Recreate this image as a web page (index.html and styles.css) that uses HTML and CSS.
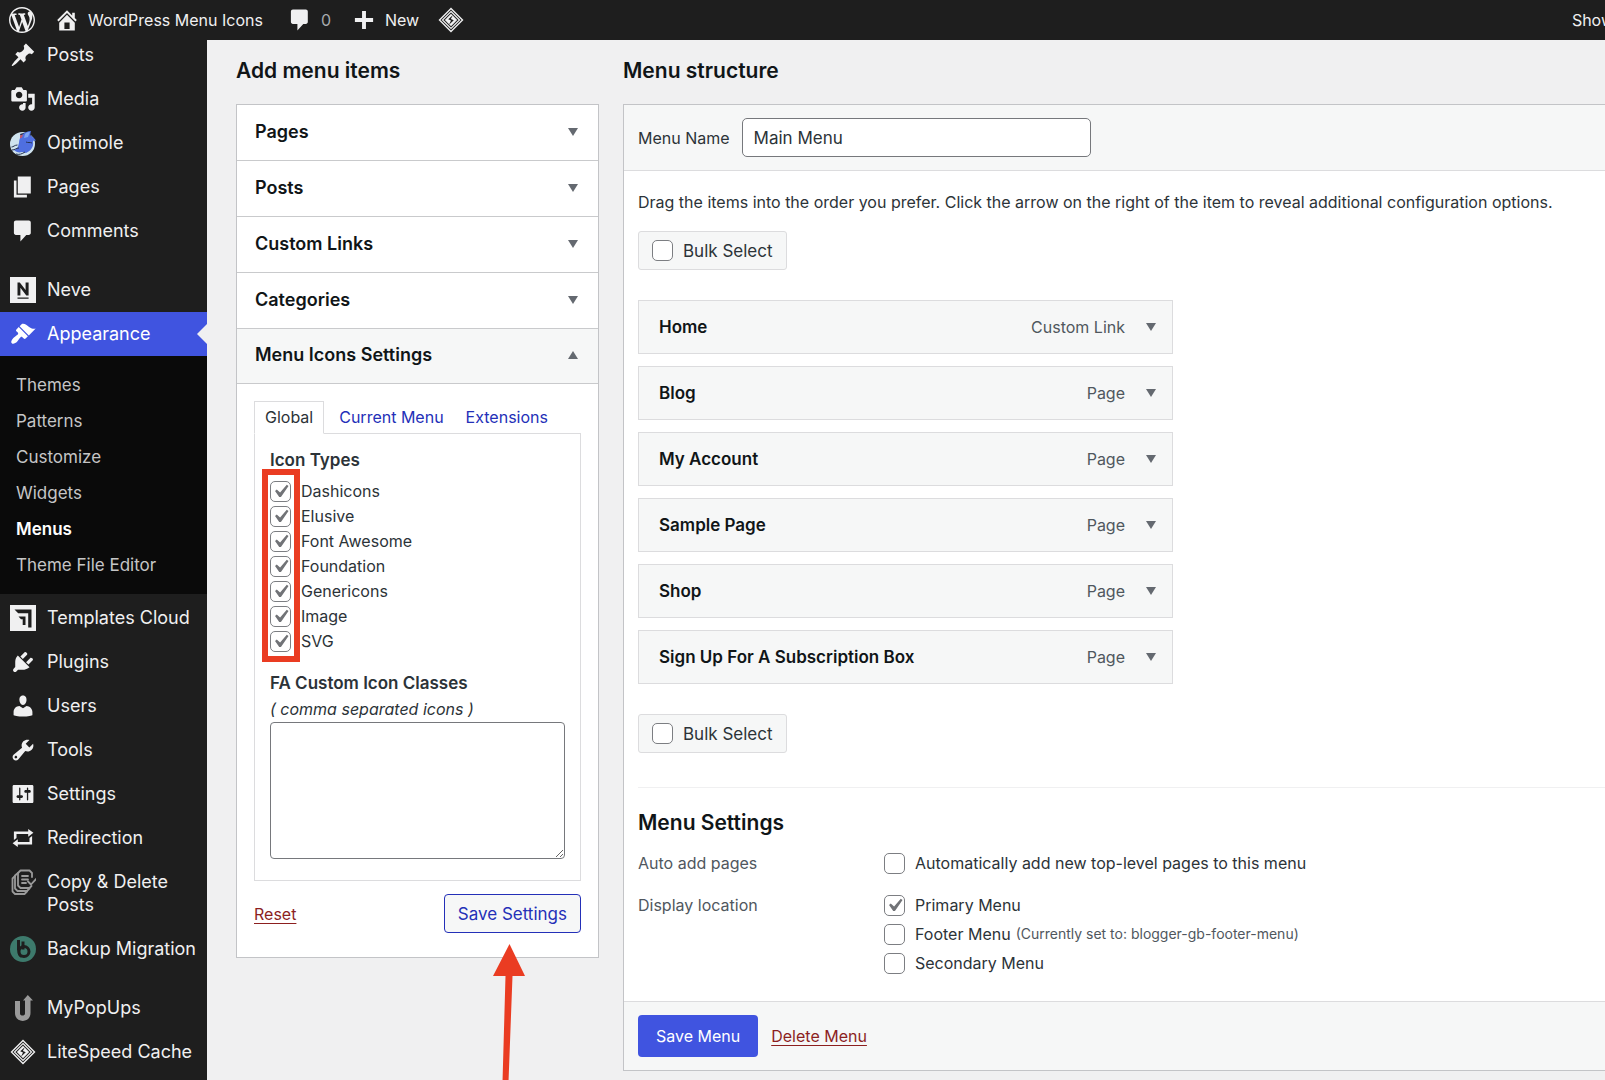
FILE: index.html
```html
<!DOCTYPE html>
<html lang="en">
<head>
<meta charset="utf-8">
<meta name="viewport" content="width=device-width, initial-scale=1">
<title>Menus - WordPress Menu Icons</title>
<link rel="stylesheet" href="styles.css">
</head>
<body>
<svg class="sprite" aria-hidden="true">
  <symbol id="i-wp" viewBox="0 0 20 20"><path d="M20 10c0-5.51-4.49-10-10-10C4.48 0 0 4.49 0 10c0 5.52 4.48 10 10 10 5.51 0 10-4.48 10-10zM7.78 15.37L4.37 6.22c.55-.02 1.17-.08 1.17-.08.5-.06.44-1.13-.06-1.11 0 0-1.45.11-2.37.11-.18 0-.37 0-.58-.01C4.12 2.69 6.87 1.11 10 1.11c2.33 0 4.45.87 6.05 2.34-.68-.11-1.65.39-1.65 1.58 0 .74.45 1.36.9 2.1.35.61.55 1.36.55 2.46 0 1.49-1.4 5-1.4 5l-3.03-8.37c.54-.02.82-.17.82-.17.5-.05.44-1.25-.06-1.22 0 0-1.44.12-2.38.12-.87 0-2.33-.12-2.33-.12-.5-.03-.56 1.2-.06 1.22l.92.08 1.26 3.41zM17.41 10c.24-.64.74-1.87.43-4.25.7 1.29 1.05 2.71 1.05 4.25 0 3.29-1.73 6.24-4.4 7.78.97-2.59 1.94-5.2 2.92-7.78zM6.1 18.09C3.12 16.65 1.11 13.53 1.11 10c0-1.3.23-2.48.72-3.59C3.25 10.3 4.67 14.2 6.1 18.09zm4.03-6.63l2.58 6.98c-.86.29-1.76.45-2.71.45-.79 0-1.57-.11-2.29-.33.81-2.38 1.62-4.74 2.42-7.1z"/></symbol>
  <symbol id="i-home" viewBox="0 0 20 20"><path d="M16 8.5l1.53 1.53-1.06 1.06L10 4.6l-6.47 6.49-1.06-1.06L10 2.5l4 4v-2h2v4zm-6-2.46l6 5.99V18H4v-5.97zM12 17v-5H8v5h4z"/></symbol>
  <symbol id="i-comment" viewBox="0 0 20 20"><path d="M4.500 2h10c.8 0 1.500.7 1.500 1.500v8c0 .8-.7 1.500-1.500 1.500H12.500L8 18v-5H4.500C3.700 13 3 12.300 3 11.500v-8C3 2.700 3.700 2 4.500 2z"/></symbol>
  <symbol id="i-plus" viewBox="0 0 20 20"><path d="M17 8.500v3h-5.500V17h-3v-5.500H3v-3h5.500V3h3v5.500z"/></symbol>
  <symbol id="i-litespeed" viewBox="0 0 26 26"><path fill="none" stroke="currentColor" stroke-width="1.400" d="M13 1.500L24.500 13 13 24.500 1.500 13z"/><path fill="none" stroke="currentColor" stroke-width="1.200" d="M13 4.500L21.500 13 13 21.500 4.500 13z"/><path d="M13 6.800L19.200 13 13 19.200 6.800 13z"/><path fill="#1e1e1e" d="M14.800 8.200l-4.600 4 2.800 1.300-2 4.200 4.800-4.400-2.900-1.300z"/></symbol>
  <symbol id="i-post" viewBox="0 0 20 20"><path d="M10.440 3.020l1.820-1.820 6.360 6.350-1.830 1.820c-1.050-.68-2.480-.57-3.410.36l-.75.75c-.92.93-1.040 2.350-.35 3.410l-1.830 1.820-2.410-2.410-2.800 2.790c-.42.42-3.380 2.710-3.800 2.290s1.860-3.390 2.280-3.810l2.790-2.790L4.100 9.360l1.830-1.820c1.050.69 2.480.57 3.400-.36l.75-.75c.93-.92 1.050-2.350.36-3.410z"/></symbol>
  <symbol id="i-media" viewBox="0 0 20 20"><path d="M13 11V4c0-.55-.45-1-1-1h-1.670L9 1H5L3.670 3H2c-.55 0-1 .45-1 1v7c0 .55.45 1 1 1h10c.55 0 1-.45 1-1zM7 4.500c1.380 0 2.500 1.120 2.500 2.500S8.380 9.500 7 9.500 4.500 8.380 4.500 7 5.620 4.500 7 4.500zM14 6h5v10.500c0 1.380-1.120 2.500-2.500 2.500S14 17.880 14 16.500s1.120-2.500 2.500-2.500c.17 0 .34.02.5.05V9h-3V6zm-4 8.050V13h2v3.500c0 1.380-1.120 2.500-2.500 2.500S7 17.880 7 16.500 8.120 14 9.500 14c.17 0 .34.02.5.05z"/></symbol>
  <symbol id="i-optimole" viewBox="0 0 26 26"><ellipse cx="12.500" cy="14" rx="12.500" ry="12" fill="#cfe3ee"/><path fill="#26324f" d="M10 4l10-3 2 7-4 3-6-1z"/><path fill="#4f6fe0" d="M12 5c3-3 6-4 9-4l-1 4c2 2 5 3 6 6-2-1-3 0-3 1 1 4-2 9-7 11l-4-1c-3 1-6 0-8-2 4-1 4-4 5-7 0-3 1-6 3-8z"/><path fill="#7fa5f0" d="M15 4c2-2 3-2 5-2l-2 5-4 1z"/><path fill="none" stroke="#26324f" stroke-width="1" d="M1.500 17c2 0 3-2 6-2M2 20c3 0 4-2 7-2M6 24c3 1 6 0 9-2M16 12c2 1 4 0 6 1"/><path fill="#c4576b" d="M10 5.500l3-1-1 3-2 1z"/></symbol>
  <symbol id="i-pages" viewBox="0 0 20 20"><path d="M6 15V2h10v13H6zm-1 1h8v2H3V5h2v11z"/></symbol>
  <symbol id="i-neve" viewBox="0 0 26 26"><path d="M0 0h26v26H0z"/><path fill="#1e1e1e" d="M7.500 5.500H9.800l5.800 7.600V5.500h3v13h-2.300l-5.900-7.700v7.700h-2.900zM7.500 20.500h11.100v1.300H7.500z"/></symbol>
  <symbol id="i-brush" viewBox="0 0 20 20"><path d="M14.480 11.060L7.410 3.990l1.500-1.500c.5-.56 2.300-.47 3.510.32 1.210.8 1.430 1.280 2.910 2.100 1.180.64 2.450 1.260 4.450.85zm-.71.71L6.700 4.700 4.930 6.470c-.39.39-.39 1.020 0 1.410l1.060 1.060c.39.39.39 1.030 0 1.420-.6.6-1.430 1.110-2.210 1.690-.35.26-.7.53-1.010.84C1.430 14.230.4 16.080 1.400 17.070c.99 1 2.840-.03 4.180-1.360.31-.31.58-.66.85-1.020.57-.78 1.080-1.610 1.690-2.210.39-.39 1.020-.39 1.410 0l1.060 1.060c.39.39 1.020.39 1.410 0z"/></symbol>
  <symbol id="i-templates" viewBox="0 0 26 26"><path d="M0 0h26v26H0z"/><path fill="#1e1e1e" d="M4.500 4.500h17v18h-3.300V8.200H8.200zM8.500 11.500h7v8.500h-2.800v-5.700H11z"/></symbol>
  <symbol id="i-plugins" viewBox="0 0 20 20"><path d="M13.110 4.360L9.870 7.600 8 5.730l3.240-3.240c.35-.34 1.050-.2 1.560.32.52.51.66 1.210.31 1.550zm-8 1.770l.91-1.120 9.010 9.010-1.190.84c-.71.71-2.630 1.160-3.820 1.160H6.140L4.900 17.260c-.59.59-1.540.59-2.120 0-.59-.58-.59-1.530 0-2.120l1.240-1.240v-3.880c0-1.130.4-3.190 1.090-3.890zm7.260 3.970l3.240-3.240c.34-.35 1.040-.21 1.550.31.52.51.66 1.210.31 1.550l-3.240 3.250z"/></symbol>
  <symbol id="i-users" viewBox="0 0 20 20"><path d="M10 9.250c-2.270 0-2.730-3.440-2.730-3.440C7 4.020 7.820 2 9.970 2c2.160 0 2.980 2.020 2.710 3.810 0 0-.41 3.440-2.680 3.440zm0 2.570L12.720 10c2.390 0 4.520 2.330 4.520 4.530v2.490s-3.650 1.130-7.240 1.130c-3.650 0-7.240-1.130-7.240-1.130v-2.490c0-2.250 1.940-4.480 4.470-4.480z"/></symbol>
  <symbol id="i-tools" viewBox="0 0 20 20"><path d="M16.680 9.770c-1.340 1.340-3.300 1.670-4.950.99l-5.410 6.520c-.99.99-2.590.99-3.580 0s-.99-2.590 0-3.570l6.520-5.420c-.68-1.650-.35-3.610.99-4.950 1.280-1.280 3.120-1.620 4.720-1.060l-2.890 2.890 2.820 2.820 2.860-2.870c.53 1.580.18 3.390-1.080 4.650zM3.810 16.210c.4.39 1.040.39 1.430 0 .4-.4.4-1.040 0-1.430-.39-.4-1.030-.4-1.430 0-.39.39-.39 1.030 0 1.430z"/></symbol>
  <symbol id="i-settings" viewBox="0 0 20 20"><path d="M18 16V4c0-.55-.45-1-1-1H3c-.55 0-1 .45-1 1v12c0 .55.45 1 1 1h14c.55 0 1-.45 1-1zM8 11h1c.55 0 1 .45 1 1s-.45 1-1 1H8v1.500c0 .28-.22.5-.5.5s-.5-.22-.5-.5V13H6c-.55 0-1-.45-1-1s.45-1 1-1h1V5.500c0-.28.22-.5.5-.5s.5.22.5.5V11zm5-2h-1c-.55 0-1-.45-1-1s.45-1 1-1h1V5.500c0-.28.22-.5.5-.5s.5.22.5.5V7h1c.55 0 1 .45 1 1s-.45 1-1 1h-1v5.500c0 .28-.22.5-.5.5s-.5-.22-.5-.5V9z"/></symbol>
  <symbol id="i-repeat" viewBox="0 0 20 20"><path d="M5 7v3l-2 1.500V5h11V3l4 3.010L14 9V7H5zm10 6v-3l2-1.500V15H6v2l-4-3.010L6 11v2h9z"/></symbol>
  <symbol id="i-copy" viewBox="0 0 26 26"><g fill="none" stroke="#9a9a9a" stroke-width="1.800" stroke-linejoin="round" stroke-linecap="round"><path d="M22 8V4l-2.500-2.500h-9L8 4v12.500l2.500 2.500h9l2-2"/><path d="M8 4L5 6.500v13L7.500 22H17l2.500-2.500"/><path d="M5 7L2.500 9.500v13L5 25h9.500l2.500-2.500"/><path d="M12 7h6M12 10.500h6M12 14h4M18 12.500l3 3 6-6.500"/></g></symbol>
  <symbol id="i-backup" viewBox="0 0 26 26"><circle cx="13" cy="13" r="13" fill="#3d7a6c"/><path fill="none" stroke="#1e1e1e" stroke-width="3" d="M8.500 4v10.500M13 5.500v8"/><circle cx="14" cy="15.500" r="5" fill="none" stroke="#1e1e1e" stroke-width="3"/><path fill="none" stroke="#1e1e1e" stroke-width="2" d="M8.500 13v3a6 6 0 0 0 3 5"/></symbol>
  <symbol id="i-popups" viewBox="0 0 26 26"><path fill="#9a9a9a" d="M5 6h5v12.500c0 2.700 5 2.700 5 0V5.500h-2L17.800 0 23 5.500h-2.500V18c0 10.500-15.500 10.500-15.500 0z"/></symbol>
</svg>

<header class="adminbar">
  <a class="bar-logo" href="#" aria-label="About WordPress"><svg class="icon"><use href="#i-wp"/></svg></a>
  <a class="bar-site" href="#"><svg class="icon"><use href="#i-home"/></svg>WordPress Menu Icons</a>
  <a class="bar-comments" href="#"><svg class="icon"><use href="#i-comment"/></svg><span>0</span></a>
  <a class="bar-new" href="#"><svg class="icon"><use href="#i-plus"/></svg>New</a>
  <a class="bar-cache" href="#" aria-label="LiteSpeed Cache"><svg class="icon"><use href="#i-litespeed"/></svg></a>
  <a class="bar-account" href="#">Show</a>
</header>

<div class="layout">
  <nav class="sidebar" aria-label="Main menu">
    <a class="nav-item" href="#"><svg class="icon"><use href="#i-post"/></svg>Posts</a>
    <a class="nav-item" href="#"><svg class="icon"><use href="#i-media"/></svg>Media</a>
    <a class="nav-item" href="#"><svg class="icon"><use href="#i-optimole"/></svg>Optimole</a>
    <a class="nav-item" href="#"><svg class="icon"><use href="#i-pages"/></svg>Pages</a>
    <a class="nav-item" href="#"><svg class="icon"><use href="#i-comment"/></svg>Comments</a>
    <a class="nav-item spaced" href="#"><svg class="icon"><use href="#i-neve"/></svg>Neve</a>
    <a class="nav-item current" href="#"><svg class="icon"><use href="#i-brush"/></svg>Appearance</a>
    <div class="submenu">
      <a href="#">Themes</a>
      <a href="#">Patterns</a>
      <a href="#">Customize</a>
      <a href="#">Widgets</a>
      <a class="active" href="#">Menus</a>
      <a href="#">Theme File Editor</a>
    </div>
    <a class="nav-item" href="#"><svg class="icon"><use href="#i-templates"/></svg>Templates Cloud</a>
    <a class="nav-item" href="#"><svg class="icon"><use href="#i-plugins"/></svg>Plugins</a>
    <a class="nav-item" href="#"><svg class="icon"><use href="#i-users"/></svg>Users</a>
    <a class="nav-item" href="#"><svg class="icon"><use href="#i-tools"/></svg>Tools</a>
    <a class="nav-item" href="#"><svg class="icon"><use href="#i-settings"/></svg>Settings</a>
    <a class="nav-item" href="#"><svg class="icon"><use href="#i-repeat"/></svg>Redirection</a>
    <a class="nav-item" href="#"><svg class="icon"><use href="#i-copy"/></svg><span>Copy &amp; Delete Posts</span></a>
    <a class="nav-item" href="#"><svg class="icon"><use href="#i-backup"/></svg>Backup Migration</a>
    <a class="nav-item spaced" href="#"><svg class="icon"><use href="#i-popups"/></svg>MyPopUps</a>
    <a class="nav-item" href="#"><svg class="icon"><use href="#i-litespeed"/></svg>LiteSpeed Cache</a>
  </nav>

  <main class="content">
    <section class="add-items">
      <h2>Add menu items</h2>
      <div class="accordion">
        <button class="acc-head" type="button">Pages<span class="caret"></span></button>
        <button class="acc-head" type="button">Posts<span class="caret"></span></button>
        <button class="acc-head" type="button">Custom Links<span class="caret"></span></button>
        <button class="acc-head" type="button">Categories<span class="caret"></span></button>
        <button class="acc-head open" type="button" aria-expanded="true">Menu Icons Settings<span class="caret up"></span></button>
        <form class="acc-body">
          <div class="tabs">
            <a class="tab selected" href="#">Global</a>
            <a class="tab" href="#">Current Menu</a>
            <a class="tab" href="#">Extensions</a>
          </div>
          <div class="tab-panel">
            <h3>Icon Types</h3>
            <div class="icon-types">
              <label><input type="checkbox" checked>Dashicons</label>
              <label><input type="checkbox" checked>Elusive</label>
              <label><input type="checkbox" checked>Font Awesome</label>
              <label><input type="checkbox" checked>Foundation</label>
              <label><input type="checkbox" checked>Genericons</label>
              <label><input type="checkbox" checked>Image</label>
              <label><input type="checkbox" checked>SVG</label>
              <span class="highlight"></span>
            </div>
            <label class="fa-label" for="fa-classes"><strong>FA Custom Icon Classes</strong><em>( comma separated icons )</em></label>
            <textarea id="fa-classes"></textarea>
          </div>
          <div class="acc-actions">
            <a class="danger" href="#">Reset</a>
            <div class="save-wrap">
              <button class="btn-outline" type="button">Save Settings</button>
              <svg class="arrow" viewBox="0 0 34 138" aria-hidden="true"><path d="M17.500 0L33 32H20.500L16.500 138H10.500L13.500 32H1z"/></svg>
            </div>
          </div>
        </form>
      </div>
    </section>

    <section class="structure">
      <h2>Menu structure</h2>
      <form class="frame">
        <div class="frame-head">
          <label for="menu-name">Menu Name</label>
          <input id="menu-name" type="text" value="Main Menu">
        </div>
        <div class="frame-body">
          <p>Drag the items into the order you prefer. Click the arrow on the right of the item to reveal additional configuration options.</p>
          <label class="bulk"><input type="checkbox">Bulk Select</label>
          <ul class="menu-items">
            <li><strong>Home</strong><span>Custom Link</span><button type="button" aria-label="Edit Home"><span class="caret"></span></button></li>
            <li><strong>Blog</strong><span>Page</span><button type="button" aria-label="Edit Blog"><span class="caret"></span></button></li>
            <li><strong>My Account</strong><span>Page</span><button type="button" aria-label="Edit My Account"><span class="caret"></span></button></li>
            <li><strong>Sample Page</strong><span>Page</span><button type="button" aria-label="Edit Sample Page"><span class="caret"></span></button></li>
            <li><strong>Shop</strong><span>Page</span><button type="button" aria-label="Edit Shop"><span class="caret"></span></button></li>
            <li><strong>Sign Up For A Subscription Box</strong><span>Page</span><button type="button" aria-label="Edit Sign Up For A Subscription Box"><span class="caret"></span></button></li>
          </ul>
          <label class="bulk"><input type="checkbox">Bulk Select</label>
          <div class="menu-settings">
            <h2>Menu Settings</h2>
            <div class="setting" role="group" aria-labelledby="auto-add">
              <span class="setting-name" id="auto-add">Auto add pages</span>
              <div class="choices">
                <label><input type="checkbox">Automatically add new top-level pages to this menu</label>
              </div>
            </div>
            <div class="setting" role="group" aria-labelledby="display-loc">
              <span class="setting-name" id="display-loc">Display location</span>
              <div class="choices">
                <label><input type="checkbox" checked>Primary Menu</label>
                <label><input type="checkbox">Footer Menu <small>(Currently set to: blogger-gb-footer-menu)</small></label>
                <label><input type="checkbox">Secondary Menu</label>
              </div>
            </div>
          </div>
        </div>
        <div class="frame-foot">
          <button class="btn-primary" type="button">Save Menu</button>
          <a class="danger" href="#">Delete Menu</a>
        </div>
      </form>
    </section>
  </main>
</div>
</body>
</html>
```
FILE: styles.css
```css
* { box-sizing: border-box; }

body {
  margin: 0;
  background: #f0f0f1;
  color: #2c3338;
  font: 16px/24px Inter, "Liberation Sans", sans-serif;
}

h2, h3, p, ul { margin: 0; padding: 0; }
a { text-decoration: none; }
button, input, textarea { font: inherit; }
button { cursor: pointer; }

.sprite { position: absolute; width: 0; height: 0; }
.icon { flex: none; width: 26px; height: 26px; fill: currentColor; overflow: visible; }

/* Top bar */
.adminbar {
  position: fixed;
  inset: 0 0 auto;
  z-index: 2;
  display: flex;
  align-items: center;
  height: 40px;
  padding-left: 9px;
  background: #1e1e1e;
  overflow: hidden;
}
.adminbar a { display: flex; align-items: center; gap: 8px; color: #f0f0f1; white-space: nowrap; }
.bar-site { margin-left: 19px; }
.bar-comments { margin-left: 24px; }
.bar-comments span { color: #a7aaad; }
.bar-new { margin-left: 20px; }
.bar-cache { margin-left: 19px; }
.adminbar .bar-account { margin-left: auto; margin-right: -9px; }

/* Side navigation */
.layout { position: relative; display: flex; min-height: 100vh; overflow: hidden; }
.sidebar { flex: none; width: 207px; padding-top: 33px; background: #1e1e1e; }
.nav-item {
  position: relative;
  display: flex;
  align-items: flex-start;
  gap: 11px;
  padding: 10px 4px 11px 10px;
  color: #f0f0f1;
  font-size: 18px;
  line-height: 23px;
}
.nav-item .icon { margin: -1px 0 -2px; }
.nav-item.spaced { margin-top: 15px; }
.nav-item.current { background: #4054e0; color: #fff; }
.nav-item.current::after {
  content: "";
  position: absolute;
  top: 12px;
  right: 0;
  border: 10px solid transparent;
  border-left: 0;
  border-right-color: #f0f0f1;
}
.submenu { display: flex; flex-direction: column; padding: 11px 16px; margin-bottom: 2px; background: #0a0a0a; }
.submenu a { color: #c5c5c6; font-size: 17px; line-height: 36px; }
.submenu .active { color: #fff; font-weight: 600; }

/* Main area */
.content { flex: 1; min-width: 0; display: flex; align-items: flex-start; gap: 24px; padding: 59px 0 9px 29px; }
h2 { color: #101517; font-size: 21px; line-height: 24px; font-weight: 600; }
.add-items { flex: none; width: 363px; }
.structure { flex: 1; min-width: 0; }
.accordion, .frame { margin-top: 21px; border: 1px solid #c3c4c7; background: #fff; }

.caret { flex: none; border: 5px solid transparent; border-top: 8px solid #646970; border-bottom: 0; }
.caret.up { border-top: 0; border-bottom: 8px solid #646970; }

.acc-head {
  display: flex;
  align-items: center;
  justify-content: space-between;
  width: 100%;
  height: 56px;
  padding: 0 20px 2px 18px;
  border: 0;
  border-bottom: 1px solid #c9cacc;
  background: #fff;
  color: #101517;
  font-size: 18px;
  font-weight: 600;
}
.acc-head.open { height: 55px; background: #f6f7f7; }
.acc-body { padding: 17px 17px 24px; }

.tabs { display: flex; margin-bottom: -1px; }
.tab { padding: 3px 10px 4px; border: 1px solid transparent; color: #2430b8; }
.tab:nth-child(2) { margin-left: 4px; }
.tab.selected { border-color: #dcdcde; border-bottom-color: #fff; background: #fff; color: #2c3338; }
.tab-panel { padding: 14px 15px 21px; border: 1px solid #dcdcde; }
h3 { font-size: 17px; line-height: 24px; font-weight: 600; }

input[type="checkbox"] {
  appearance: none;
  flex: none;
  width: 21px;
  height: 21px;
  margin: 0;
  border: 1px solid #7c7e82;
  border-radius: 5px;
  background: #fff;
}
input[type="checkbox"]:checked {
  background: #fff url("data:image/svg+xml,%3Csvg xmlns='http://www.w3.org/2000/svg' viewBox='0 0 20 20'%3E%3Cpath fill='%23717377' d='M14.830 4.890l1.340.94-5.810 8.380H9.020L5.780 9.670l1.340-1.250 2.570 2.400z'/%3E%3C/svg%3E") center / 26px no-repeat;
}

.icon-types { position: relative; margin-top: 7px; }
.icon-types label { display: flex; align-items: center; gap: 10px; line-height: 25px; }
.highlight { position: absolute; inset: -10px auto -8px -8px; width: 38px; border: 6px solid #ea3c22; pointer-events: none; }

.fa-label { display: block; margin-top: 16px; line-height: 26px; }
.fa-label strong, .fa-label em { display: block; }
strong { font-size: 17px; font-weight: 600; }
textarea {
  display: block;
  width: 100%;
  height: 137px;
  padding: 4px 8px;
  border: 1px solid #76787c;
  border-radius: 4px;
  background: #fff;
}

.acc-actions { display: flex; align-items: center; justify-content: space-between; margin-top: 13px; }
.danger { color: #8c1f1f; text-decoration: underline; text-underline-offset: 3px; }
.save-wrap { position: relative; }
.btn-outline { display: block; height: 39px; padding: 0 13px; border: 1px solid #2430b8; border-radius: 4px; background: #f6f7f7; color: #2430b8; font-size: 17px; }
.arrow { position: absolute; top: 50px; left: 48px; width: 34px; height: 138px; fill: #ea3c22; pointer-events: none; }

/* Menu structure */
.frame { margin-right: -1px; }
.frame-head { display: flex; align-items: center; gap: 12px; height: 66px; padding: 0 14px; border-bottom: 1px solid #dcdcde; background: #f6f7f7; }
.frame-head input { width: 349px; height: 39px; padding: 0 11px; border: 1px solid #76787c; border-radius: 5px; background: #fff; color: #2c3338; font-size: 17px; }
.frame-body { padding: 19px 0 26px 14px; }
.frame-body p { white-space: nowrap; }
.bulk { display: flex; align-items: center; gap: 10px; width: fit-content; height: 39px; margin-top: 17px; padding: 0 13px; border: 1px solid #dcdcde; border-radius: 3px; background: #f6f7f7; font-size: 17px; }

.menu-items { display: flex; flex-direction: column; gap: 12px; max-width: 535px; margin: 30px 0; list-style: none; }
.menu-items li { display: flex; align-items: center; height: 54px; padding: 0 9px 0 20px; border: 1px solid #dcdcde; background: #f6f7f7; }
.menu-items strong { flex: 1; color: #101517; }
.menu-items li > span { color: #50575e; }
.menu-items button { display: flex; justify-content: center; width: 24px; margin-left: 14px; padding: 8px 0; border: 0; background: none; }

.menu-settings { margin-top: 34px; padding-top: 23px; border-top: 1px solid #f0f0f1; }
.menu-settings h2 { margin-bottom: 16px; }
.setting { display: grid; grid-template-columns: 246px 1fr; margin-bottom: 18px; }
.setting:last-child { margin-bottom: 0; }
.setting-name { color: #50575e; }
.choices { display: flex; flex-direction: column; gap: 5px; }
.choices label { display: flex; align-items: center; gap: 10px; }
small { margin-left: -5px; color: #50575e; font-size: 14px; }

.frame-foot { display: flex; align-items: center; gap: 13px; padding: 13px 14px; border-top: 1px solid #dcdcde; background: #f6f7f7; }
.btn-primary { height: 42px; padding: 0 18px; border: 0; border-radius: 4px; background: #4054e0; color: #fff; }
```
